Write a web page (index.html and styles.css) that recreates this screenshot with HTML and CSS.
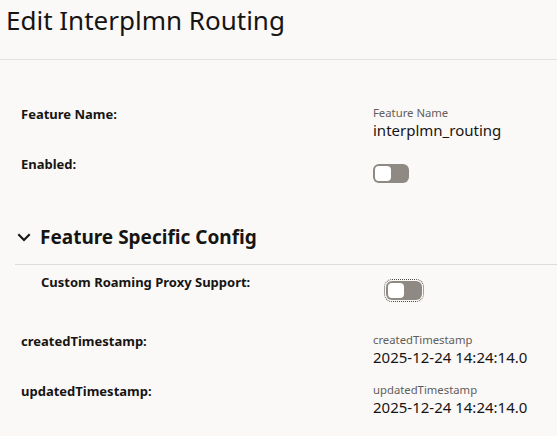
FILE: index.html
```html
<!DOCTYPE html>
<html>
<head>
<meta charset="utf-8">
<link rel="stylesheet" href="styles.css">
</head>
<body>
<header class="page-header">
  <h1 class="page-title">Edit Interplmn Routing</h1>
</header>
<main class="form">
  <div class="row row-name">
    <div class="label">Feature Name:</div>
    <div class="value">
      <div class="field-hint">Feature Name</div>
      <div class="field-text">interplmn_routing</div>
    </div>
  </div>
  <div class="row row-enabled">
    <div class="label">Enabled:</div>
    <div class="value">
      <span class="switch"><span class="knob"></span></span>
    </div>
  </div>
  <section class="section">
    <h2 class="section-title">
      <svg class="chevron" width="14" height="9" viewBox="0 0 14 9"><path d="M1.3 1.3 L7 7 L12.7 1.3" fill="none" stroke="#161513" stroke-width="2.1"/></svg>
      <span>Feature Specific Config</span>
    </h2>
    <div class="section-body">
      <div class="row row-nested">
        <div class="label">Custom Roaming Proxy Support:</div>
        <div class="value">
          <span class="switch focused"><span class="knob"></span></span>
        </div>
      </div>
    </div>
  </section>
  <div class="row row-ts">
    <div class="label">createdTimestamp:</div>
    <div class="value">
      <div class="field-hint">createdTimestamp</div>
      <div class="field-text">2025-12-24 14:24:14.0</div>
    </div>
  </div>
  <div class="row row-ts2">
    <div class="label">updatedTimestamp:</div>
    <div class="value">
      <div class="field-hint">updatedTimestamp</div>
      <div class="field-text">2025-12-24 14:24:14.0</div>
    </div>
  </div>
</main>
</body>
</html>
```

FILE: styles.css
```css
html, body {
  margin: 0;
  padding: 0;
  background: #fbf9f8;
  color: #161513;
  font-family: "Noto Sans", "Open Sans", sans-serif;
}
.page-header {
  height: 60px;
  border-bottom: 1px solid #e3e1df;
  box-sizing: border-box;
  padding: 2px 0 0 6px;
}
.page-title {
  margin: 0;
  font-size: 26px;
  font-weight: 400;
  line-height: 36px;
}
.form {
  padding: 46px 0 0 0;
}
.row {
  display: grid;
  grid-template-columns: 352px 1fr;
  padding-left: 21px;
}
.label {
  font-size: 13px;
  font-weight: 700;
  line-height: 16px;
}
.field-hint {
  font-size: 11.3px;
  line-height: 14px;
  color: #625e5a;
}
.field-text {
  font-size: 15px;
  line-height: 20px;
}
.row-enabled { margin-top: 16px; }
.row-enabled .value { padding-top: 8px; }
.switch {
  display: flex;
  align-items: center;
  width: 36px;
  height: 19px;
  border-radius: 6px;
  background: #8e8983;
  box-sizing: border-box;
  padding: 2px;
}
.knob {
  width: 16px;
  height: 15px;
  border-radius: 4px;
  background: #fff;
}
.switch.focused {
  outline: 1px dotted #4f4c48;
  outline-offset: 1px;
}
.section {
  margin-top: 41px;
}
.section-title {
  margin: 0;
  display: flex;
  align-items: center;
  gap: 9px;
  padding: 0 0 14px 17px;
  font-size: 19px;
  font-weight: 700;
  line-height: 26px;
}
.chevron { margin-top: 1px; }
.section-body {
  margin-left: 15px;
  border-top: 1px solid #dedcda;
  padding-top: 9px;
}
.row-nested {
  grid-template-columns: 345px 1fr;
  padding-left: 26px;
}
.row-nested .value { padding-top: 7px; }
.row-ts { margin-top: 33px; }
.row-ts2 { margin-top: 16px; }
```
